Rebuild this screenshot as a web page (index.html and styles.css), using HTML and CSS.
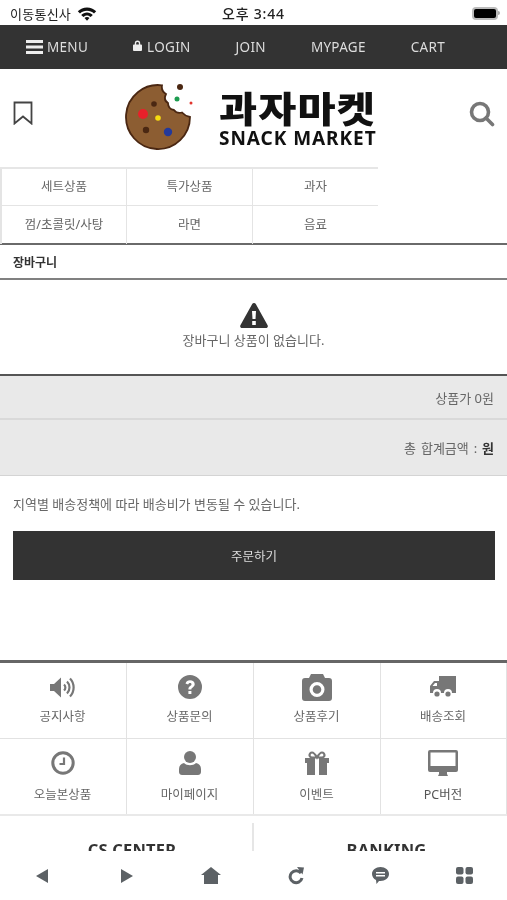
FILE: index.html
```html
<!DOCTYPE html>
<html lang="ko">
<head>
<meta charset="utf-8">
<title>과자마켓</title>
<link rel="stylesheet" href="styles.css">
</head>
<body>
<div class="app">
  <div class="status">
    <div class="status-left">
      <span class="carrier">이동통신사</span>
      <svg class="wifi" viewBox="0 0 20 15"><path d="M10 1.500C6.500 1.500 3.300 2.900 .8 5.300l2.200 2.200C4.900 5.800 7.300 4.800 10 4.800s5.100 1 7 2.700l2.200-2.200C16.700 2.900 13.500 1.500 10 1.500z"/><path d="M10 6.500c-2.200 0-4.300.9-5.800 2.400l2.200 2.200c.9-.9 2.200-1.500 3.600-1.500s2.700.6 3.600 1.500l2.200-2.200C14.300 7.400 12.200 6.500 10 6.500z"/><path d="M10 11c-1 0-1.900.4-2.500 1l2.500 2.700 2.500-2.700c-.6-.6-1.500-1-2.500-1z"/></svg>
    </div>
    <span class="time">오후 3:44</span>
    <div class="battery"><span class="battery-body"><span class="battery-fill"></span></span><span class="battery-tip"></span></div>
  </div>

  <nav class="topnav">
    <a class="topnav-item"><svg class="ico-menu" viewBox="0 0 17 14"><path d="M0 0h17v3H0zM0 5.500h17v3H0zM0 11h17v3H0z"/></svg>MENU</a>
    <a class="topnav-item"><svg class="ico-lock" viewBox="0 0 10 12"><path d="M2 5V3.500a3 3 0 0 1 6 0V5h1a1 1 0 0 1 1 1v5a1 1 0 0 1-1 1H1a1 1 0 0 1-1-1V6a1 1 0 0 1 1-1zm1.500 0h3V3.500a1.500 1.500 0 0 0-3 0z"/></svg>LOGIN</a>
    <a class="topnav-item">JOIN</a>
    <a class="topnav-item">MYPAGE</a>
    <a class="topnav-item">CART</a>
  </nav>

  <header class="brand">
    <svg class="ico-bookmark" viewBox="0 0 20 24"><path d="M1.500 1.500h17v21L10 15.500l-8.500 7z"/></svg>
    <div class="logo">
      <svg class="cookie" viewBox="0 0 68 68">
        <path class="cookie-body" d="M37 2.300A32 32 0 1 0 65 34Q60 33 57 29.500Q52 31 49 27Q43 26 43 20Q38 17 41 11Q36 8 37 2.300z"/>
        <circle cx="29" cy="21" r="2.800" fill="#4a2712"/><circle cx="18" cy="31" r="5" fill="#e8202a"/><circle cx="33" cy="35" r="2.800" fill="#f6dc10"/><circle cx="21" cy="47" r="3.200" fill="#4a2712"/><circle cx="43" cy="49" r="4.200" fill="#23399b"/>
        <circle cx="55" cy="4" r="3" fill="#4a2712"/><circle cx="52" cy="16" r="2.500" fill="#1d9c50"/><circle cx="66" cy="20" r="1.500" fill="#e2352e"/>
      </svg>
      <div class="logo-text">
        <span class="logo-ko">과자마켓</span>
        <span class="logo-en">SNACK MARKET</span>
      </div>
    </div>
    <svg class="ico-search" viewBox="0 0 26 26"><circle cx="11" cy="11" r="8.500"/><path d="M17 17l6.500 6.500"/></svg>
  </header>

  <div class="cats">
    <a class="cat">세트상품</a><a class="cat">특가상품</a><a class="cat">과자</a>
    <a class="cat">껌/초콜릿/사탕</a><a class="cat">라면</a><a class="cat">음료</a>
  </div>

  <h1 class="page-title">장바구니</h1>

  <section class="empty">
    <svg class="ico-warn" viewBox="0 0 28 25"><path fill-rule="evenodd" d="M14 0c.8 0 1.400.4 1.800 1l11.800 21.200c.7 1.300-.2 2.800-1.700 2.800H2.100C.6 25-.3 23.500.4 22.200L12.200 1c.4-.6 1-1 1.800-1zM12 8l.5 8h3l.5-8zm.2 10v4h3.600v-4z"/></svg>
    <p class="empty-text">장바구니 상품이 없습니다.</p>
  </section>

  <div class="summary">
    <div class="sum-row sum-price">상품가 0원</div>
    <div class="sum-row sum-total">총 합계금액 : <b>원</b></div>
  </div>

  <p class="notice">지역별 배송정책에 따라 배송비가 변동될 수 있습니다.</p>
  <div class="order-wrap"><a class="order">주문하기</a></div>

  <div class="quick">
    <a class="quick-cell">
      <span class="quick-ico"><svg width="26" height="23" viewBox="0 0 26 23"><path d="M0 8h4l7-6.500v20L4 15H0z"/><path class="s" d="M14 8.500a4 4 0 0 1 0 6M17 5.500a8.500 8.500 0 0 1 0 12M20 2.500a13 13 0 0 1 0 18"/></svg></span>
      <span class="quick-label">공지사항</span></a>
    <a class="quick-cell">
      <span class="quick-ico"><svg width="24" height="24" viewBox="0 0 24 24"><path fill-rule="evenodd" d="M12 0a12 12 0 1 1 0 24 12 12 0 0 1 0-24zM7.500 8.500l2.600 1.100c.3-1 1-1.600 1.900-1.600.900 0 1.500.5 1.500 1.200 0 .7-.5 1.100-1.300 1.700-1 .7-1.800 1.600-1.800 3v.6h3v-.4c0-.7.500-1.100 1.300-1.700 1.100-.8 2-1.800 2-3.500C16.700 6.900 14.600 5.300 12 5.300c-2.200 0-3.800 1.200-4.500 3.200zM10.400 16v3h3v-3z"/></svg></span>
      <span class="quick-label">상품문의</span></a>
    <a class="quick-cell">
      <span class="quick-ico"><svg width="30" height="27" viewBox="0 0 30 27"><path fill-rule="evenodd" d="M9 0h12l2 4h4a3 3 0 0 1 3 3v17a3 3 0 0 1-3 3H3a3 3 0 0 1-3-3V7a3 3 0 0 1 3-3h4zm6 8a7.500 7.500 0 1 0 0 15 7.500 7.500 0 0 0 0-15zm0 3.200a4.300 4.300 0 1 1 0 8.600 4.300 4.300 0 0 1 0-8.600z"/></svg></span>
      <span class="quick-label">상품후기</span></a>
    <a class="quick-cell">
      <span class="quick-ico"><svg width="26" height="22" viewBox="0 0 26 22"><path fill-rule="evenodd" d="M9 0h17v17h-4a4 4 0 0 0-8 0h-3a4 4 0 0 0-8 0H0V10l4-5h5zM7 7H5L2.500 10H7z"/><circle cx="7" cy="18" r="2.600"/><circle cx="18" cy="18" r="2.600"/></svg></span>
      <span class="quick-label">배송조회</span></a>
    <a class="quick-cell">
      <span class="quick-ico"><svg width="24" height="24" viewBox="0 0 24 24"><circle class="s c" cx="12" cy="12" r="10.200"/><path class="s" d="M13 6.500V13H8.500"/></svg></span>
      <span class="quick-label">오늘본상품</span></a>
    <a class="quick-cell">
      <span class="quick-ico"><svg width="22" height="24" viewBox="0 0 22 24"><circle cx="11" cy="6" r="6"/><path d="M5 12c1.500 1.500 3.700 2.200 6 2.200s4.500-.7 6-2.200c3 .5 5 2.800 5 6v3c0 2-1.500 3-3 3H3c-1.500 0-3-1-3-3v-3c0-3.200 2-5.500 5-6z"/></svg></span>
      <span class="quick-label">마이페이지</span></a>
    <a class="quick-cell">
      <span class="quick-ico"><svg width="24" height="24" viewBox="0 0 24 24"><path fill-rule="evenodd" d="M0 7h24v5H22v12H2V12H0zM10 7h4v17h-4z"/><path class="s" d="M12 6.500C10 3 8.500 1.500 7 1.500S4.500 3 4.500 4.200 6 6.500 7.500 6.500H16.500C18 6.500 19.500 5.500 19.500 4.200S18.500 1.500 17 1.500 14 3 12 6.500z"/></svg></span>
      <span class="quick-label">이벤트</span></a>
    <a class="quick-cell">
      <span class="quick-ico"><svg width="30" height="26" viewBox="0 0 30 26"><path fill-rule="evenodd" d="M2 0h26a2 2 0 0 1 2 2v18a2 2 0 0 1-2 2H19v2l1 2H10l1-2v-2H2a2 2 0 0 1-2-2V2a2 2 0 0 1 2-2zm.500 2.500V16h25V2.500z"/></svg></span>
      <span class="quick-label quick-label-dark">PC버전</span></a>
  </div>

  <div class="info">
    <div class="info-col"><h2 class="info-title">CS CENTER</h2></div>
    <div class="info-col info-col-right"><h2 class="info-title">BANKING</h2></div>
  </div>

  <div class="toolbar">
    <span class="tool"><svg width="12" height="14" viewBox="0 0 12 14"><path d="M12 0v14L0 7z"/></svg></span>
    <span class="tool"><svg width="12" height="14" viewBox="0 0 12 14"><path d="M0 0v14l12-7z"/></svg></span>
    <span class="tool"><svg width="20" height="17" viewBox="0 0 20 17"><path d="M10 0l10 8h-3v9H3V8H0z"/></svg></span>
    <span class="tool"><svg width="16" height="18" viewBox="0 0 16 18"><path class="t" d="M13 6.200A6 6 0 1 0 14 11"/><path d="M9 0l7 .5-1.500 7z"/></svg></span>
    <span class="tool"><svg width="17" height="17" viewBox="0 0 17 17"><path fill-rule="evenodd" d="M8.500 0C13.200 0 17 3 17 7s-3.800 7-8.500 7c-.5 0-1 0-1.500-.1L4.500 17l-.5-4C1.600 11.800 0 9.600 0 7 0 3 3.800 0 8.500 0zM4 5v1.500h9V5zm0 3v1.500h9V8z"/></svg></span>
    <span class="tool"><svg width="17" height="17" viewBox="0 0 17 17"><rect width="7.500" height="7.500" rx="2"/><rect x="9.500" width="7.500" height="7.500" rx="2"/><rect y="9.500" width="7.500" height="7.500" rx="2"/><rect x="9.500" y="9.500" width="7.500" height="7.500" rx="2"/></svg></span>
  </div>
</div>
</body>
</html>
```

FILE: styles.css
```css
* { box-sizing: border-box; margin: 0; padding: 0; }
html, body { height: 900px; overflow: hidden; background: #fff; }
body { font-family: "Noto Sans", "Noto Sans CJK KR", sans-serif; color: #555; font-size: 12px; }
.app { position: relative; width: 507px; height: 900px; overflow: hidden; filter: blur(.45px); }
a { display: block; color: inherit; text-decoration: none; }

.status { height: 25px; display: flex; align-items: center; justify-content: space-between; padding: 1px 7px 0 10px; position: relative; }
.status-left { display: flex; align-items: center; gap: 6px; }
.carrier { font-size: 13px; color: #222; letter-spacing: .25px; }
.wifi { width: 20px; height: 15px; fill: #111; }
.time { font-size: 14px; color: #222; font-weight: 500; position: absolute; left: 222px; letter-spacing: .8px; }
.battery { display: flex; align-items: center; }
.battery-body { width: 26px; height: 13px; border-radius: 4px; background: #bbb; padding: 2px; display: block; }
.battery-fill { display: block; height: 9px; background: #000; border-radius: 2px; }
.battery-tip { width: 2px; height: 4px; background: #aaa; border-radius: 0 2px 2px 0; }

.topnav { height: 44px; background: #333; display: flex; align-items: center; gap: 45px; padding: 0 0 0 26px; color: #ddd; font-size: 13.500px; letter-spacing: .3px; }
.topnav-item { display: flex; align-items: center; line-height: 44px; }
.ico-menu { width: 17px; height: 14px; fill: #eee; margin-right: 4px; }
.ico-lock { width: 9px; height: 11px; fill: #eee; margin: -4px 5px 0 0; }

.brand { height: 98px; display: flex; align-items: center; position: relative; padding: 0 12px 0 13px; }
.ico-bookmark { width: 20px; height: 24px; fill: none; stroke: #444; stroke-width: 1.800; margin-top: -11px; }
.ico-search { width: 26px; height: 26px; fill: none; stroke: #777; stroke-width: 3.600; margin: -8px 0 0 auto; stroke-linecap: round; }
.logo { position: absolute; left: 125px; top: 14px; display: flex; align-items: flex-start; gap: 26px; }
.cookie { width: 68px; height: 68px; flex: none; }
.cookie-body { fill: #8c5d32; stroke: #4a2712; stroke-width: 1.800; }
.logo-text { display: flex; flex-direction: column; width: 160px; color: #111; }
.logo-ko { font-family: "Noto Sans CJK KR", sans-serif; font-weight: 900; font-size: 36px; line-height: 40px; letter-spacing: 1px; margin-top: 4px; white-space: nowrap; transform: scaleX(1.15); transform-origin: left center; }
.logo-en { font-family: "Noto Sans", sans-serif; font-weight: 700; font-size: 19px; line-height: 22px; letter-spacing: .95px; white-space: nowrap; }

.cats { width: 378px; display: grid; grid-template-columns: repeat(3, 126px); grid-auto-rows: 37px; border-top: 2px solid #e6e6e6; }
.cat { border-left: 2px solid #e4e4e4; border-bottom: 1px solid #e4e4e4; text-align: center; line-height: 35px; color: #666; font-size: 12.500px; }
.cat:nth-child(n+4) { border-bottom: 0; height: 38px; line-height: 37px; }
.cat:nth-child(3n+2), .cat:nth-child(3n) { border-left-width: 1px; }

.page-title { height: 37px; border-top: 2px solid #6a6a6a; border-bottom: 2px solid #808080; font-size: 12px; font-weight: 700; color: #333; line-height: 35px; padding-left: 13px; }

.empty { height: 94px; display: flex; flex-direction: column; align-items: center; padding-top: 23px; }
.ico-warn { width: 28px; height: 25px; fill: #333; }
.empty-text { font-size: 13px; line-height: 18px; margin-top: 3px; color: #666; }

.summary { border-top: 2px solid #555; background: #e9e9e9; }
.sum-row { text-align: right; padding-right: 13px; font-size: 13px; color: #666; }
.sum-price { height: 44px; line-height: 44px; border-bottom: 2px solid #d9d9d9; }
.sum-total { height: 56px; line-height: 57px; border-bottom: 1px solid #d4d4d4; word-spacing: 1.500px; }
.sum-total b { color: #333; }

.notice { padding: 18px 13px 0; font-size: 13px; line-height: 20px; color: #666; }
.order-wrap { padding: 17px 12px 0 13px; }
.order { height: 49px; background: #333; color: #ddd; text-align: center; line-height: 52px; font-size: 12.500px; }

.quick { margin-top: 80px; border-top: 3px solid #666; display: grid; grid-template-columns: 127px 127px 127px 126px; grid-template-rows: 76px 75px; border-bottom: 2px solid #e9e9e9; }
.quick-cell { display: flex; flex-direction: column; align-items: center; border-right: 1px solid #e2e2e2; border-bottom: 1px solid #e2e2e2; padding: 7px 1px 0 0; }
.quick-cell:nth-child(n+5) { border-bottom: 0; }
.quick-cell:nth-child(n+5) .quick-label { margin-top: 5px; }
.quick-ico { height: 34px; display: flex; align-items: center; justify-content: center; fill: #777; }
.quick-ico .s { fill: none; stroke: #777; stroke-width: 2.200; }
.quick-ico .c { stroke-width: 3; }
.quick-label { font-size: 12.500px; line-height: 20px; color: #666; margin-top: 3px; }
.quick-label-dark { color: #555; }

.info { display: grid; grid-template-columns: 252px 1fr; padding-top: 7px; }
.info-col { padding-left: 12px; text-align: center; height: 40px; }
.info-col-right { border-left: 2px solid #e6e6e6; }
.info-title { font-size: 16.500px; font-weight: 700; color: #333; line-height: 20px; padding-top: 17px; letter-spacing: .2px; }

.toolbar { position: absolute; left: 0; right: 0; bottom: 0; height: 49px; background: #fff; display: grid; grid-template-columns: repeat(6, 1fr); align-items: center; fill: #5c6165; }
.tool { display: flex; justify-content: center; align-items: center; }
.tool .t { fill: none; stroke: #5c6165; stroke-width: 3; }
```
